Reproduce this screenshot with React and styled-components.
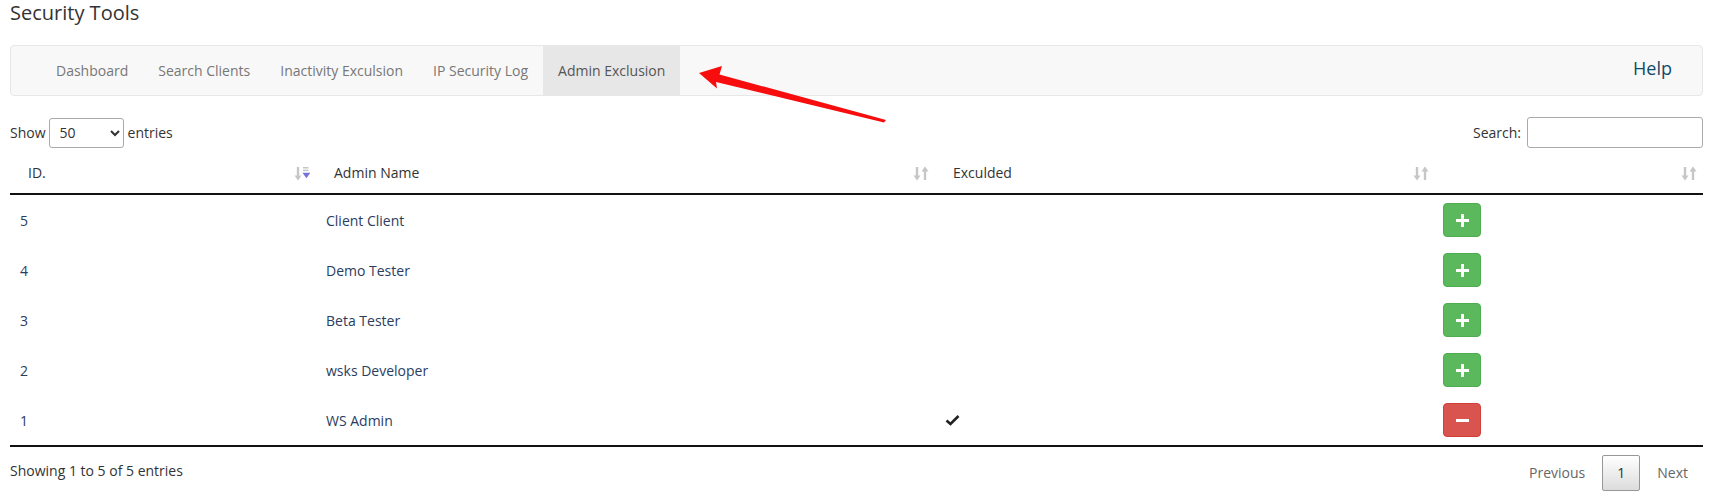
import React from "react";
import styled, { createGlobalStyle } from "styled-components";

// global page styles
const GlobalStyle = createGlobalStyle`
  html, body {
    margin: 0;
    padding: 0;
    background: #fff;
    font-family: "Open Sans", "Liberation Sans", sans-serif;
    font-size: 14px;
    color: #333;
  }
`;

// styled-components
const Page = styled.div`
  position: relative;
  padding: 0 7px 0 10px;
  width: 1710px;
  height: 491px;
  box-sizing: border-box;
  overflow: hidden;
`;

const Title = styled.h1`
  margin: 0;
  font-size: 20px;
  font-weight: 400;
  line-height: 26px;
  color: #333;
`;

const NavBar = styled.nav`
  display: flex;
  align-items: stretch;
  justify-content: space-between;
  margin-top: 19px;
  height: 51px;
  box-sizing: border-box;
  background: #f8f8f8;
  border: 1px solid #e7e7e7;
  border-radius: 4px;
  padding-left: 30px;
  padding-right: 30px;
`;

const NavList = styled.ul`
  display: flex;
  margin: 0;
  padding: 0;
  list-style: none;
`;

const NavItem = styled.li`
  display: flex;
  align-items: center;
  padding: 0 15px;
  color: ${(props) => (props.active ? "#555" : "#777")};
  background: ${(props) => (props.active ? "#e7e7e7" : "transparent")};
  cursor: pointer;
`;

const HelpLink = styled.a`
  align-self: center;
  margin-top: -6px;
  font-size: 18px;
  color: #0f4a6a;
  text-decoration: none;
`;

const Controls = styled.div`
  display: flex;
  justify-content: space-between;
  align-items: center;
  margin-top: 21px;
  height: 31px;
`;

const ControlLabel = styled.label`
  display: flex;
  align-items: center;
  gap: 4px;
  color: #333;
`;

const LengthSelect = styled.select`
  width: 75px;
  height: 30px;
  margin-left: -1px;
  padding: 0 6px;
  border: 1px solid #aaa;
  border-radius: 3px;
  background: #fff;
  font-family: inherit;
  font-size: 14px;
  color: #333;
`;

const SearchInput = styled.input`
  width: 176px;
  height: 31px;
  box-sizing: border-box;
  border: 1px solid #aaa;
  border-radius: 3px;
  margin-left: 2px;
  padding: 0 6px;
`;

const Table = styled.div`
  margin-top: 5px;
  display: grid;
  grid-template-columns: 306px 619px 500px 268px;
  border-bottom: 2px solid #111;
`;

const HeadCell = styled.div`
  display: flex;
  align-items: center;
  justify-content: space-between;
  height: 40px;
  padding: 0 5px 0 18px;
  border-bottom: 2px solid #111;
  color: #333;
  line-height: 20px;
`;

const Cell = styled.div`
  display: flex;
  align-items: center;
  height: 50px;
  padding: 0 10px;
  color: #2a3d5f;
`;

const ActionCell = styled(Cell)`
  padding-left: 8px;
`;

const ActionButton = styled.button`
  display: flex;
  align-items: center;
  justify-content: center;
  width: 38px;
  height: 34px;
  padding: 0;
  border-radius: 4px;
  border: 1px solid ${(props) => (props.remove ? "#d43f3a" : "#4cae4c")};
  background: ${(props) => (props.remove ? "#d9534f" : "#5cb85c")};
  cursor: pointer;
`;

const Footer = styled.div`
  display: flex;
  justify-content: space-between;
  align-items: flex-start;
  padding-top: 8px;
`;

const Info = styled.div`
  padding-top: 6px;
  color: #333;
`;

const Pager = styled.div`
  display: flex;
`;

const PageButton = styled.a`
  display: block;
  box-sizing: border-box;
  margin-left: 2px;
  padding: 7px 14px;
  line-height: 20px;
  border-radius: 2px;
  border: 1px solid ${(props) => (props.current ? "#979797" : "transparent")};
  background: ${(props) =>
    props.current ? "linear-gradient(to bottom, #fff 0%, #dcdcdc 100%)" : "transparent"};
  color: ${(props) => (props.current ? "#333" : "#666")};
  cursor: default;
`;

const ArrowLayer = styled.svg`
  position: absolute;
  left: 0;
  top: 0;
  pointer-events: none;
`;

function SortIcon({ active }) {
  return (
    <svg width="17" height="15" viewBox="0 0 17 15">
      <g fill="#c6c6c6">
        <rect x="2.8" y="1" width="2.4" height="10" />
        <polygon points="0.5,9.5 7.5,9.5 4,14.5" />
        {active ? (
          <>
            <rect x="9" y="1" width="5.5" height="1.5" />
            <rect x="9" y="3.6" width="5.5" height="1.5" />
          </>
        ) : (
          <>
            <rect x="10.8" y="4" width="2.4" height="10" />
            <polygon points="8.5,5.5 15.5,5.5 12,0.5" />
          </>
        )}
      </g>
      {active && <polygon points="8.5,6.8 16.3,6.8 12.4,12.2" fill="#7373d9" />}
    </svg>
  );
}

function PlusIcon() {
  return (
    <svg width="13" height="13" viewBox="0 0 13 13">
      <rect x="5" y="0" width="3" height="13" fill="#fff" />
      <rect x="0" y="5" width="13" height="3" fill="#fff" />
    </svg>
  );
}

function MinusIcon() {
  return (
    <svg width="13" height="13" viewBox="0 0 13 13">
      <rect x="0" y="5" width="13" height="3" fill="#fff" />
    </svg>
  );
}

function CheckIcon() {
  return (
    <svg width="15" height="12" viewBox="0 0 15 12">
      <path d="M1.5 6.5 L5.5 10 L13.5 2" stroke="#222" strokeWidth="2.6" fill="none" />
    </svg>
  );
}

const tabs = ["Dashboard", "Search Clients", "Inactivity Exculsion", "IP Security Log", "Admin Exclusion"];

const rows = [
  { id: 5, name: "Client Client", excluded: false },
  { id: 4, name: "Demo Tester", excluded: false },
  { id: 3, name: "Beta Tester", excluded: false },
  { id: 2, name: "wsks Developer", excluded: false },
  { id: 1, name: "WS Admin", excluded: true }
];

function App() {
  return (
    <React.Fragment>
      <GlobalStyle />
      <Page>
        <Title>Security Tools</Title>
        <NavBar>
          <NavList>
            {tabs.map((t) => (
              <NavItem key={t} active={t === "Admin Exclusion"}>
                {t}
              </NavItem>
            ))}
          </NavList>
          <HelpLink href="#">Help</HelpLink>
        </NavBar>

        <Controls>
          <ControlLabel>
            Show
            <LengthSelect defaultValue="50">
              <option value="10">10</option>
              <option value="25">25</option>
              <option value="50">50</option>
              <option value="100">100</option>
            </LengthSelect>
            entries
          </ControlLabel>
          <ControlLabel>
            Search:
            <SearchInput type="search" />
          </ControlLabel>
        </Controls>

        <Table>
          <HeadCell>
            <span>ID.</span>
            <SortIcon active />
          </HeadCell>
          <HeadCell>
            <span>Admin Name</span>
            <SortIcon />
          </HeadCell>
          <HeadCell>
            <span>Exculded</span>
            <SortIcon />
          </HeadCell>
          <HeadCell>
            <span />
            <SortIcon />
          </HeadCell>
          {rows.map((r) => (
            <React.Fragment key={r.id}>
              <Cell>{r.id}</Cell>
              <Cell>{r.name}</Cell>
              <Cell>{r.excluded && <CheckIcon />}</Cell>
              <ActionCell>
                <ActionButton remove={r.excluded}>
                  {r.excluded ? <MinusIcon /> : <PlusIcon />}
                </ActionButton>
              </ActionCell>
            </React.Fragment>
          ))}
        </Table>

        <Footer>
          <Info>Showing 1 to 5 of 5 entries</Info>
          <Pager>
            <PageButton>Previous</PageButton>
            <PageButton current>1</PageButton>
            <PageButton>Next</PageButton>
          </Pager>
        </Footer>

        <ArrowLayer width="1710" height="491">
          <polygon
            points="699,73 722,66 719.5,74.5 886,120 884,122.5 716,82 717,88.5"
            fill="#f70d0d"
          />
        </ArrowLayer>
      </Page>
    </React.Fragment>
  );
}

export default App;
